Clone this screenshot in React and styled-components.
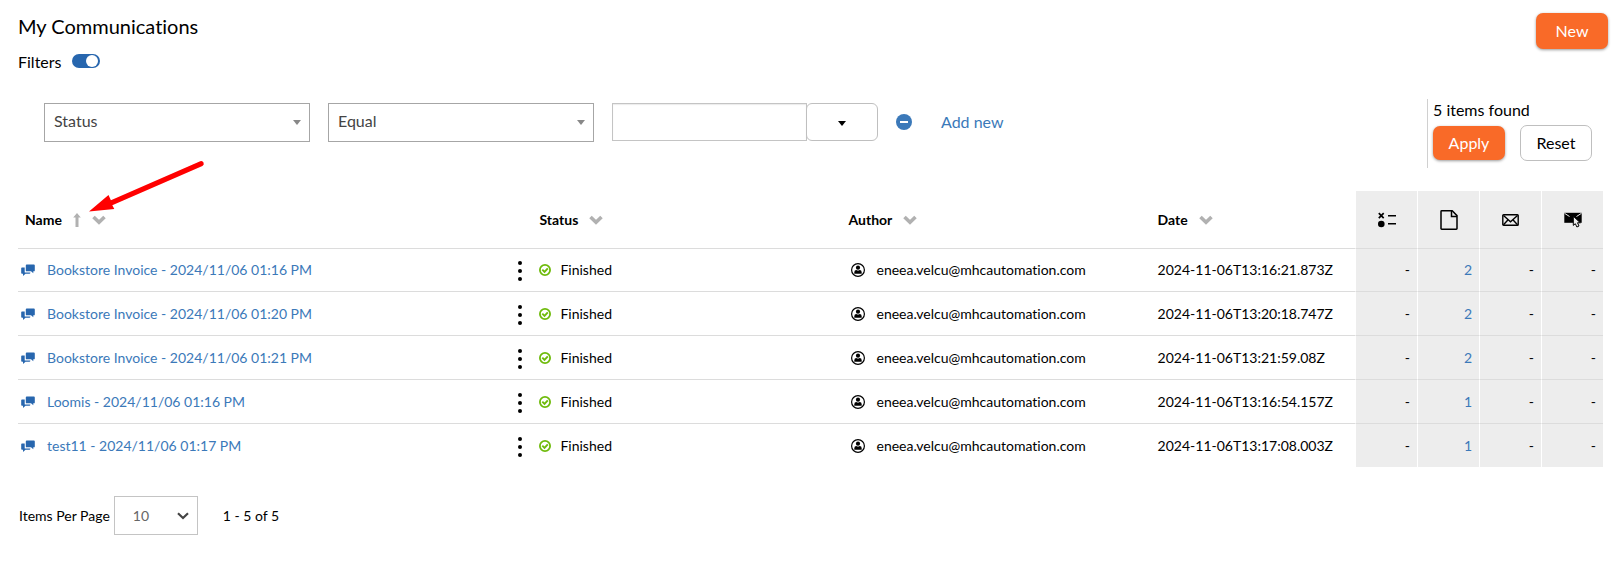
import React, { useState } from "react";
import styled, { createGlobalStyle, css } from "styled-components";

const GlobalStyle = createGlobalStyle`
  *, *::before, *::after { box-sizing: border-box; }
  body {
    margin: 0;
    background: #fff;
    color: #000;
    font-family: Lato, "Liberation Sans", sans-serif;
    font-size: 14px;
    line-height: 20px;
    font-variant-ligatures: none;
  }
  button, input, select { font: inherit; color: inherit; }
`;

const Page = styled.main`
  position: relative;
  padding: 12px 13px 32px 18px;
`;

const Header = styled.header`
  display: flex;
  justify-content: space-between;
  align-items: flex-start;
  margin-right: -5px;
`;

const Title = styled.h1`
  margin: 0 0 10px;
  font-size: 20px;
  line-height: 28px;
  font-weight: 400;
`;

const SwitchLabel = styled.label`
  display: flex;
  align-items: center;
  gap: 11px;
  font-size: 16px;
  line-height: 24px;
`;

const Switch = styled.input`
  appearance: none;
  display: flex;
  justify-content: flex-start;
  align-items: center;
  width: 28px;
  height: 14px;
  margin: 0 0 2px;
  padding: 0 2px;
  border-radius: 7px;
  background: #999;
  cursor: pointer;

  &::before {
    content: "";
    width: 12px;
    height: 12px;
    border-radius: 50%;
    background: #fff;
  }
  &:checked {
    justify-content: flex-end;
    background: #2766ae;
  }
`;

const Button = styled.button`
  width: 72px;
  height: 36px;
  padding: 0;
  border-radius: 7px;
  font-size: 16px;
  cursor: pointer;
  ${({ $primary, $compact }) =>
    $primary
      ? css`
          height: ${$compact ? "34px" : "36px"};
          margin-top: ${$compact ? 0 : "1px"};
          border: 0;
          background: #f96a28;
          color: #fff;
          box-shadow: 0 1px 3px rgba(0, 0, 0, 0.4);
        `
      : css`
          border: 1px solid #bfbfbf;
          background: #fff;
        `}
`;

const FilterBar = styled.section`
  display: flex;
  justify-content: space-between;
  margin: 25px 11px 23px 26px;
`;

const Criteria = styled.div`
  display: flex;
  align-items: flex-start;
  gap: 18px;
  padding-top: 4px;
`;

const SelectBox = styled.span`
  position: relative;
  display: inline-flex;
  width: ${({ $width }) => $width}px;

  select {
    appearance: none;
    width: 100%;
    height: 39px;
    border: 1px solid ${({ $light }) => ($light ? "#c4c4c4" : "#a6a6a6")};
    border-radius: 0;
    background: #fff;
    color: ${({ $light }) => ($light ? "#666" : "#444")};
    padding: ${({ $light }) => ($light ? "0 18px" : "0 9px 4px")};
    font-size: ${({ $light }) => ($light ? "14px" : "16px")};
  }
  svg {
    position: absolute;
    right: 9px;
    top: 0;
    bottom: 0;
    margin: auto 0;
    pointer-events: none;
  }
`;

const ValueGroup = styled.div`
  display: flex;
`;

const ValueInput = styled.input`
  width: 195px;
  height: 38px;
  border: 1px solid #c4c4c4;
  padding: 0 10px;
  box-shadow: inset 0 1px 1px rgba(0, 0, 0, 0.08);
`;

const ValueToggle = styled.button`
  display: grid;
  place-items: center;
  width: 72px;
  height: 38px;
  margin-left: -1px;
  padding: 3px 0 0;
  border: 1px solid #bfbfbf;
  border-radius: 6px;
  background: #fff;
`;

const IconButton = styled.button`
  display: grid;
  place-items: center;
  height: ${({ $height }) => $height || 20}px;
  padding: 0;
  border: 0;
  background: none;
  cursor: pointer;
`;

const Link = styled.a`
  color: #3b79b9;
  text-decoration: none;
`;

const AddLink = styled(Link)`
  margin-left: 11px;
  font-size: 16px;
  line-height: 38px;
`;

const Results = styled.div`
  display: flex;
  flex-direction: column;
  gap: 4px;
  height: 69px;
  padding-left: 5px;
  border-left: 1px solid #d0d0d0;
  font-size: 16px;
  line-height: 22px;
`;

const Actions = styled.div`
  display: flex;
  align-items: center;
  gap: 15px;
`;

const Table = styled.table`
  width: 100%;
  table-layout: fixed;
  border-collapse: separate;
  border-spacing: 0;
`;

const Col = styled.col`
  width: ${({ $width }) => $width};
`;

const cell = css`
  padding: 0;
  border-bottom: 1px solid #dcdcdc;
  white-space: nowrap;
`;

const HeadCell = styled.th`
  ${cell}
  height: 58px;
  padding-left: ${({ $first }) => ($first ? 7 : 0)}px;
  text-align: left;
  font-weight: 700;
`;

const countCell = css`
  border-left: 1px solid #fff;
  background: #ededed;
`;

const CountHead = styled.th`
  ${cell}
  ${countCell}
  text-align: center;

  svg {
    display: block;
    margin: 0 auto;
  }
`;

const Cell = styled.td`
  ${cell}
  height: 44px;
`;

const CountCell = styled.td`
  ${cell}
  ${countCell}
  padding-right: 7px;
  text-align: right;
`;

const Row = styled.tr`
  &:first-child td,
  &:last-child td { height: 43px; }
  &:last-child td { border-bottom: 0; }
`;

const Inline = styled.div`
  display: flex;
  align-items: center;
  gap: ${({ $gap }) => $gap}px;
  padding-left: ${({ $inset }) => $inset || 0}px;
`;

const RowMenu = styled(IconButton)`
  width: 12px;
  height: 22px;
  padding-top: 2px;
  margin-left: auto;
  margin-right: 13px;
`;

const Pager = styled.footer`
  display: flex;
  align-items: center;
  margin: 29px 0 0 1px;
`;

const PageSize = styled.label`
  display: flex;
  align-items: center;
  gap: 4px;
`;

const Range = styled.span`
  margin-left: 25px;
`;

const Pointer = styled.svg`
  position: absolute;
  left: 88px;
  top: 158px;
  pointer-events: none;
`;

const Caret = ({ color }) => (
  <svg width="8" height="5" viewBox="0 0 8 5" aria-hidden="true">
    <path d="M0 0h8L4 5z" fill={color} />
  </svg>
);

const MenuChevron = () => (
  <svg width="14" height="10" viewBox="0 0 14 10" aria-hidden="true">
    <path d="M1.500 2 7 7.200 12.500 2" fill="none" stroke="#b1b1b1" strokeWidth="3.600" />
  </svg>
);

const SortArrow = () => (
  <svg width="8" height="14" viewBox="0 0 8 14" aria-hidden="true">
    <path d="M4 0 7.800 4.500H5.500V14h-3V4.500H.2z" fill="#b1b1b1" />
  </svg>
);

const SelectChevron = () => (
  <svg width="12" height="8" viewBox="0 0 12 8" aria-hidden="true">
    <path d="M1 1.300 6 6l5-4.700" fill="none" stroke="#444" strokeWidth="2.200" />
  </svg>
);

const MinusIcon = () => (
  <svg width="16" height="16" viewBox="0 0 16 16" aria-hidden="true">
    <circle cx="8" cy="8" r="8" fill="#3b79b9" />
    <path d="M4 7h8v2H4z" fill="#fff" />
  </svg>
);

const ChatIcon = () => (
  <svg width="14" height="12" viewBox="0 0 14 12" aria-hidden="true">
    <path d="M1 3.500h2.700v4.900h5.600V9q0 .8-.9.800H4.500L2 12V9.800H1q-.8 0-.8-.8V4.300q0-.8.800-.8z" fill="#2766ae" />
    <path d="M5.700.5h7.200q.9 0 .9.900v5q0 .9-.9.900h-.6v1.900L10 7.300H5.700q-.9 0-.9-.9v-5q0-.9.900-.9z" fill="#2766ae" />
  </svg>
);

const DotsIcon = () => (
  <svg width="4" height="20" viewBox="0 0 4 20" aria-hidden="true">
    <circle cx="2" cy="2" r="2" />
    <circle cx="2" cy="10" r="2" />
    <circle cx="2" cy="18" r="2" />
  </svg>
);

const CheckIcon = () => (
  <svg width="12" height="12" viewBox="0 0 12 12" fill="none" stroke="#6fbb0c" aria-hidden="true">
    <circle cx="6" cy="6" r="5.100" strokeWidth="1.800" />
    <path d="M3.300 5.700 5.500 7.900l3.300-3.600" strokeWidth="1.900" />
  </svg>
);

const UserIcon = () => (
  <svg width="14" height="14" viewBox="0 0 14 14" aria-hidden="true">
    <circle cx="7" cy="7" r="6.400" fill="none" stroke="#000" strokeWidth="1.200" />
    <circle cx="7" cy="4.700" r="2.100" />
    <path d="M3.300 10.700V9.300Q3.300 7 5.400 7q1.600 1 3.200 0 2.100 0 2.100 2.300v1.400z" />
  </svg>
);

const TasksIcon = () => (
  <svg width="18" height="16" viewBox="0 0 18 16" aria-hidden="true">
    <path d="m.8 1.200 4.900 5M5.700 1.200l-4.900 5" stroke="#000" strokeWidth="1.700" />
    <circle cx="3.300" cy="12" r="3.300" />
    <path d="M10 3h8v1.500h-8zM10 11h8v1.500h-8z" />
  </svg>
);

const PageIcon = () => (
  <svg width="18" height="20" viewBox="0 0 18 20" fill="none" stroke="#000" strokeWidth="1.500" aria-hidden="true">
    <path d="M1.700.8h10.500L17 5.600v13q0 .6-.7.600H1.700q-.7 0-.7-.6V1.400q0-.6.700-.6z" />
    <path d="M11.500 1v5.500H17" />
  </svg>
);

const MailIcon = () => (
  <svg width="17" height="12" viewBox="0 0 17 12" fill="none" stroke="#000" strokeWidth="1.400" aria-hidden="true">
    <rect x=".8" y=".8" width="15.400" height="10.400" rx=".8" />
    <path d="m1.500 1.500 7 6.200 7-6.200M1.500 10.700l4.600-5M15.500 10.700l-4.600-5" />
  </svg>
);

const MailClickIcon = () => (
  <svg width="18" height="16" viewBox="0 0 18 16" aria-hidden="true">
    <path d="M.3.800h17.400v10H.3z" />
    <path d="m.5 1.300 5 3.200M17.500 1.300l-5 3.200" stroke="#ededed" strokeWidth="1" />
    <path d="M9.300 4.200v9.200l2-1.700 1.600 3.300 2.100-1-1.500-3.200h2.800z" fill="#ededed" stroke="#000" strokeWidth="1" />
  </svg>
);

const columns = ["Name", "Status", "Author", "Date"];

const countColumns = [
  ["Tasks", TasksIcon],
  ["Documents", PageIcon],
  ["Emails", MailIcon],
  ["Opened emails", MailClickIcon],
];

const author = "eneea.velcu@mhcautomation.com";

const rows = [
  ["Bookstore Invoice - 2024/11/06 01:16 PM", "2024-11-06T13:16:21.873Z", 2],
  ["Bookstore Invoice - 2024/11/06 01:20 PM", "2024-11-06T13:20:18.747Z", 2],
  ["Bookstore Invoice - 2024/11/06 01:21 PM", "2024-11-06T13:21:59.08Z", 2],
  ["Loomis - 2024/11/06 01:16 PM", "2024-11-06T13:16:54.157Z", 1],
  ["test11 - 2024/11/06 01:17 PM", "2024-11-06T13:17:08.003Z", 1],
];

export default function App() {
  const [filters, setFilters] = useState(true);

  return (
    <Page>
      <GlobalStyle />
      <Header>
        <div>
          <Title>My Communications</Title>
          <SwitchLabel>
            Filters
            <Switch type="checkbox" role="switch" checked={filters} onChange={(e) => setFilters(e.target.checked)} />
          </SwitchLabel>
        </div>
        <Button $primary>New</Button>
      </Header>

      <FilterBar aria-label="Filters">
        <Criteria>
          <SelectBox $width={266}>
            <select aria-label="Field">
              <option>Status</option>
            </select>
            <Caret color="#888" />
          </SelectBox>
          <SelectBox $width={266}>
            <select aria-label="Condition">
              <option>Equal</option>
            </select>
            <Caret color="#888" />
          </SelectBox>
          <ValueGroup>
            <ValueInput type="text" aria-label="Value" />
            <ValueToggle aria-label="Choose value">
              <Caret color="#000" />
            </ValueToggle>
          </ValueGroup>
          <IconButton $height={38} aria-label="Remove filter">
            <MinusIcon />
          </IconButton>
          <AddLink href="#add">Add new</AddLink>
        </Criteria>
        <Results>
          <span>5 items found</span>
          <Actions>
            <Button $primary $compact>Apply</Button>
            <Button>Reset</Button>
          </Actions>
        </Results>
      </FilterBar>

      <Table>
        <colgroup>
          <Col $width="32.9%" />
          <Col $width="19.5%" />
          <Col $width="19.5%" />
          <Col />
          {countColumns.map(([label]) => (
            <Col key={label} $width="62px" />
          ))}
        </colgroup>
        <thead>
          <tr>
            {columns.map((name, i) => (
              <HeadCell key={name} $first={i === 0} scope="col">
                <Inline $gap={11}>
                  {name}
                  {i === 0 && (
                    <IconButton aria-label="Sorted ascending">
                      <SortArrow />
                    </IconButton>
                  )}
                  <IconButton aria-label={`${name} column menu`}>
                    <MenuChevron />
                  </IconButton>
                </Inline>
              </HeadCell>
            ))}
            {countColumns.map(([label, Icon]) => (
              <CountHead key={label} scope="col" aria-label={label}>
                <Icon />
              </CountHead>
            ))}
          </tr>
        </thead>
        <tbody>
          {rows.map(([name, date, documents]) => (
            <Row key={name}>
              <Cell>
                <Inline $gap={12} $inset={3}>
                  <ChatIcon />
                  <Link href="#communication">{name}</Link>
                  <RowMenu aria-label={`Actions for ${name}`}>
                    <DotsIcon />
                  </RowMenu>
                </Inline>
              </Cell>
              <Cell>
                <Inline $gap={9}>
                  <CheckIcon />
                  Finished
                </Inline>
              </Cell>
              <Cell>
                <Inline $gap={12} $inset={2}>
                  <UserIcon />
                  {author}
                </Inline>
              </Cell>
              <Cell>{date}</Cell>
              <CountCell>-</CountCell>
              <CountCell>
                <Link href="#documents">{documents}</Link>
              </CountCell>
              <CountCell>-</CountCell>
              <CountCell>-</CountCell>
            </Row>
          ))}
        </tbody>
      </Table>

      <Pager>
        <PageSize>
          Items Per Page
          <SelectBox $width={84} $light>
            <select defaultValue="10">
              <option>10</option>
              <option>25</option>
              <option>50</option>
            </select>
            <SelectChevron />
          </SelectBox>
        </PageSize>
        <Range>1 - 5 of 5</Range>
      </Pager>

      <Pointer width="118" height="58" viewBox="0 0 118 58" aria-hidden="true">
        <path d="M1 53.500 20.500 37l2.400 5.200L112.200 3.200a2.600 2.600 0 0 1 2.200 4.700L24.300 47.200l2 3.800z" fill="#f00" />
      </Pointer>
    </Page>
  );
}
